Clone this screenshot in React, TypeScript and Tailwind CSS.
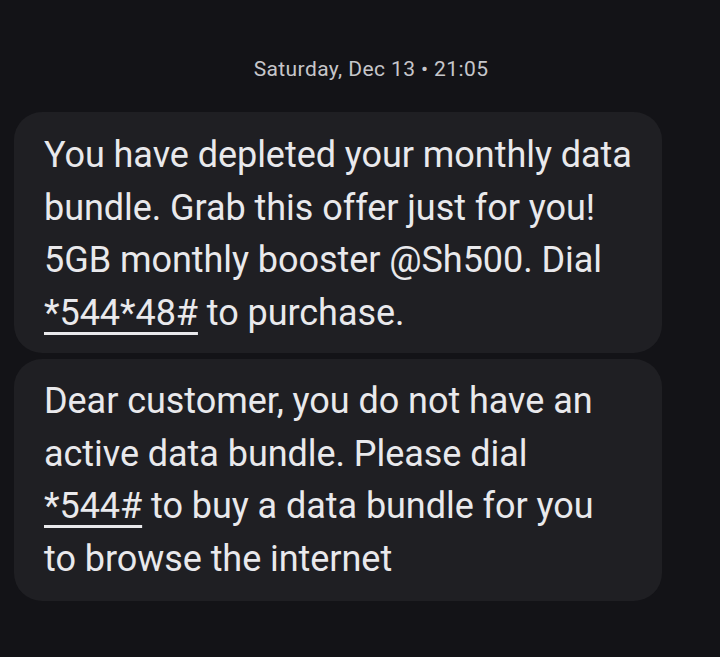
import React from "react";

export default function App() {
  return (
    <div
      className="w-[720px] h-[657px] bg-[#131317] overflow-hidden"
      style={{ fontFamily: "Roboto, 'Liberation Sans', sans-serif" }}
    >
      <div className="pt-[56px] text-center text-[21px] leading-[26px] tracking-[0.4px] text-[#c6c6ca] pl-[22px]">
        Saturday, Dec 13 • 21:05
      </div>
      <div className="mt-[30px] pl-[14px] w-[662px] flex flex-col gap-[6px]">
        <div className="bg-[#1f1f23] rounded-[28px] pl-[30px] pr-[10px] pt-[17px] pb-[14px] text-[36px] leading-[52.5px] text-[#e9e9ec] tracking-[-0.05px]">
          You have depleted your monthly data
          <br />
          bundle. Grab this offer just for you!
          <br />
          5GB monthly booster @Sh500. Dial
          <br />
          <span className="underline decoration-[3px] underline-offset-[7px]">*544*48#</span> to purchase.
        </div>
        <div className="bg-[#1f1f23] rounded-[28px] pl-[30px] pr-[10px] pt-[16px] pb-[16px] text-[36px] leading-[52.5px] text-[#e9e9ec] tracking-[-0.05px]">
          Dear customer, you do not have an
          <br />
          active data bundle. Please dial
          <br />
          <span className="underline decoration-[3px] underline-offset-[7px]">*544#</span> to buy a data bundle for you
          <br />
          to browse the internet
        </div>
      </div>
    </div>
  );
}
